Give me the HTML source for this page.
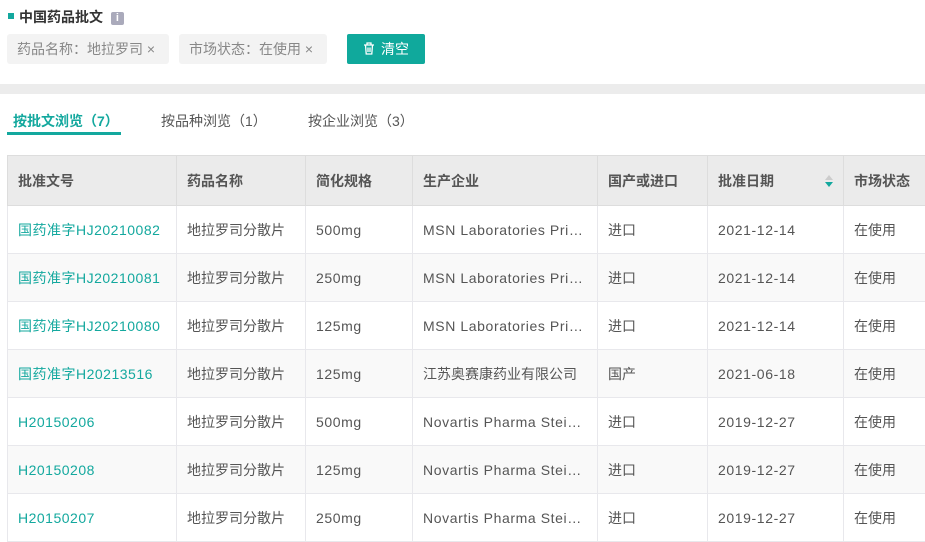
<!DOCTYPE html><html><head><meta charset="utf-8"><style>
*{margin:0;padding:0;box-sizing:border-box}
body{width:925px;height:541px;overflow:hidden;background:#fff;font-family:"Liberation Sans","Noto Sans CJK SC",sans-serif;color:#555;font-size:14px;position:relative}
.abs{position:absolute}
.title{left:8px;top:8px;font-weight:bold;font-size:14px;color:#333;line-height:18px}
.title:before{content:"";display:inline-block;width:6px;height:6px;background:#13a89e;margin-right:5px;vertical-align:middle;position:relative;top:-2px}
.tag{top:34px;height:30px;line-height:30px;background:#f3f3f3;border-radius:3px;padding:0 10px;color:#888;font-size:14px}
.btn{left:347px;top:34px;width:78px;height:30px;background:#10a99c;color:#fff;line-height:30px;text-align:center;font-size:14px;border-radius:2px}
.bar{left:0;top:84px;width:925px;height:10px;background:#ececec}
.tab{top:112px;font-size:14px;line-height:18px;color:#555}
table{position:absolute;left:7px;top:155px;border-collapse:collapse;width:930px;table-layout:fixed}
td,th{height:48px;padding:0 10px;text-align:left;border:1px solid #e8e8ec;white-space:nowrap;overflow:hidden;text-overflow:ellipsis;font-size:14px;background:#fff}
th{height:50px;background:#ebebeb;color:#555;font-weight:bold;border-color:#ddd;position:relative}
tr.g td{background:#f9f9f9}
td.l{color:#13a89e;letter-spacing:.5px}
td.e{letter-spacing:.6px}
.sort{position:absolute;right:9px;top:18px;width:10px;height:14px}
</style></head><body>
<div class="abs title">中国药品批文 <span style="display:inline-block;width:13px;height:13px;background:#aab;color:#fff;font-size:11px;line-height:13px;text-align:center;border-radius:2px;vertical-align:middle;margin-left:4px">i</span></div>
<div class="abs tag" style="left:7px;width:162px">药品名称：地拉罗司 ×</div>
<div class="abs tag" style="left:179px;width:148px">市场状态：在使用 ×</div>
<div class="abs btn"><svg width="12" height="13" viewBox="0 0 12 13" style="vertical-align:-1px;margin-right:6px"><path d="M1 3h10M4 3V1h4v2M2.5 3l.7 9h5.6l.7-9M5 5.5v4.5M7 5.5v4.5" stroke="#fff" stroke-width="1.3" fill="none"/></svg>清空</div>
<div class="abs bar"></div>
<div class="abs tab" style="left:13px;color:#13a89e;font-weight:bold">按批文浏览（7）</div>
<div class="abs" style="left:7px;top:132px;width:114px;height:3px;background:#13a89e"></div>
<div class="abs tab" style="left:161px">按品种浏览（1）</div>
<div class="abs tab" style="left:308px">按企业浏览（3）</div>
<table>
<colgroup><col style="width:169px"><col style="width:129px"><col style="width:107px"><col style="width:185px"><col style="width:110px"><col style="width:136px"><col style="width:95px"></colgroup>
<tr><th>批准文号</th><th>药品名称</th><th>简化规格</th><th>生产企业</th><th>国产或进口</th><th>批准日期<svg class="sort" viewBox="0 0 10 14"><path d="M1 6L5 1L9 6Z" fill="#ccc"/><path d="M1 8L5 13L9 8Z" fill="#13a89e"/></svg></th><th>市场状态</th></tr>
<tr><td class="l">国药准字HJ20210082</td><td>地拉罗司分散片</td><td class="e">500mg</td><td class="e">MSN Laboratories Private Limited</td><td>进口</td><td class="e">2021-12-14</td><td>在使用</td></tr>
<tr class="g"><td class="l">国药准字HJ20210081</td><td>地拉罗司分散片</td><td class="e">250mg</td><td class="e">MSN Laboratories Private Limited</td><td>进口</td><td class="e">2021-12-14</td><td>在使用</td></tr>
<tr><td class="l">国药准字HJ20210080</td><td>地拉罗司分散片</td><td class="e">125mg</td><td class="e">MSN Laboratories Private Limited</td><td>进口</td><td class="e">2021-12-14</td><td>在使用</td></tr>
<tr class="g"><td class="l">国药准字H20213516</td><td>地拉罗司分散片</td><td class="e">125mg</td><td>江苏奥赛康药业有限公司</td><td>国产</td><td class="e">2021-06-18</td><td>在使用</td></tr>
<tr><td class="l">H20150206</td><td>地拉罗司分散片</td><td class="e">500mg</td><td class="e">Novartis Pharma Stein AG</td><td>进口</td><td class="e">2019-12-27</td><td>在使用</td></tr>
<tr class="g"><td class="l">H20150208</td><td>地拉罗司分散片</td><td class="e">125mg</td><td class="e">Novartis Pharma Stein AG</td><td>进口</td><td class="e">2019-12-27</td><td>在使用</td></tr>
<tr><td class="l">H20150207</td><td>地拉罗司分散片</td><td class="e">250mg</td><td class="e">Novartis Pharma Stein AG</td><td>进口</td><td class="e">2019-12-27</td><td>在使用</td></tr>
</table>
</body></html>
